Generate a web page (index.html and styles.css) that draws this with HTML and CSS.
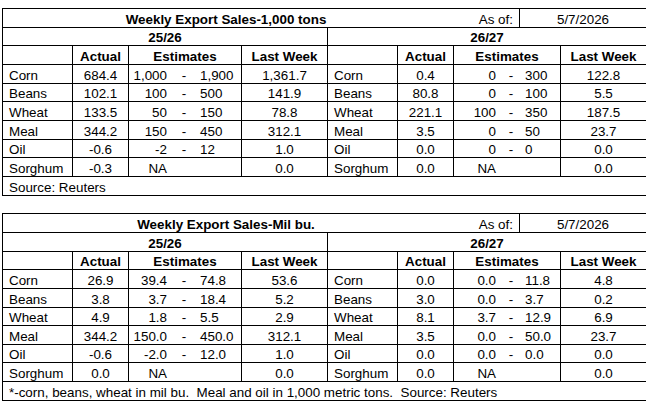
FILE: index.html
```html
<!DOCTYPE html>
<html lang="en">
<head>
<meta charset="utf-8">
<title>Weekly Export Sales</title>
<link rel="stylesheet" href="styles.css">
</head>
<body>
<div class="sheet">

  <div class="tbl">
    <div class="c full titlerow">
      <span class="title">Weekly Export Sales-1,000 tons</span>
      <span class="asof">As of:</span>
      <span class="date">5/7/2026</span>
    </div>
    <div class="c half b ctr vr">25/26</div>
    <div class="c half b ctr">26/27</div>

    <div class="c vr"></div><div class="c b ctr vr">Actual</div><div class="c est b ctr vr">Estimates</div><div class="c b ctr vr">Last Week</div>
    <div class="c vr"></div><div class="c b ctr vr">Actual</div><div class="c est b ctr vr">Estimates</div><div class="c b ctr">Last Week</div>

    <div class="c lbl vr">Corn</div><div class="c ctr vr">684.4</div><div class="c lo">1,000</div><div class="c ctr">-</div><div class="c hi vr">1,900</div><div class="c ctr vr">1,361.7</div>
    <div class="c lbl vr">Corn</div><div class="c ctr vr">0.4</div><div class="c lo">0</div><div class="c ctr">-</div><div class="c hi vr">300</div><div class="c ctr">122.8</div>

    <div class="c lbl vr">Beans</div><div class="c ctr vr">102.1</div><div class="c lo">100</div><div class="c ctr">-</div><div class="c hi vr">500</div><div class="c ctr vr">141.9</div>
    <div class="c lbl vr">Beans</div><div class="c ctr vr">80.8</div><div class="c lo">0</div><div class="c ctr">-</div><div class="c hi vr">100</div><div class="c ctr">5.5</div>

    <div class="c lbl vr">Wheat</div><div class="c ctr vr">133.5</div><div class="c lo">50</div><div class="c ctr">-</div><div class="c hi vr">150</div><div class="c ctr vr">78.8</div>
    <div class="c lbl vr">Wheat</div><div class="c ctr vr">221.1</div><div class="c lo">100</div><div class="c ctr">-</div><div class="c hi vr">350</div><div class="c ctr">187.5</div>

    <div class="c lbl vr">Meal</div><div class="c ctr vr">344.2</div><div class="c lo">150</div><div class="c ctr">-</div><div class="c hi vr">450</div><div class="c ctr vr">312.1</div>
    <div class="c lbl vr">Meal</div><div class="c ctr vr">3.5</div><div class="c lo">0</div><div class="c ctr">-</div><div class="c hi vr">50</div><div class="c ctr">23.7</div>

    <div class="c lbl vr">Oil</div><div class="c ctr vr">-0.6</div><div class="c lo">-2</div><div class="c ctr">-</div><div class="c hi vr">12</div><div class="c ctr vr">1.0</div>
    <div class="c lbl vr">Oil</div><div class="c ctr vr">0.0</div><div class="c lo">0</div><div class="c ctr">-</div><div class="c hi vr">0</div><div class="c ctr">0.0</div>

    <div class="c lbl vr">Sorghum</div><div class="c ctr vr">-0.3</div><div class="c lo">NA</div><div class="c"></div><div class="c vr"></div><div class="c ctr vr">0.0</div>
    <div class="c lbl vr">Sorghum</div><div class="c ctr vr">0.0</div><div class="c lo">NA</div><div class="c"></div><div class="c vr"></div><div class="c ctr">0.0</div>

    <div class="c full lbl note">Source: Reuters</div>
  </div>

  <div class="tbl second">
    <div class="c full titlerow">
      <span class="title">Weekly Export Sales-Mil bu.</span>
      <span class="asof">As of:</span>
      <span class="date">5/7/2026</span>
    </div>
    <div class="c half b ctr vr">25/26</div>
    <div class="c half b ctr">26/27</div>

    <div class="c vr"></div><div class="c b ctr vr">Actual</div><div class="c est b ctr vr">Estimates</div><div class="c b ctr vr">Last Week</div>
    <div class="c vr"></div><div class="c b ctr vr">Actual</div><div class="c est b ctr vr">Estimates</div><div class="c b ctr">Last Week</div>

    <div class="c lbl vr">Corn</div><div class="c ctr vr">26.9</div><div class="c lo">39.4</div><div class="c ctr">-</div><div class="c hi vr">74.8</div><div class="c ctr vr">53.6</div>
    <div class="c lbl vr">Corn</div><div class="c ctr vr">0.0</div><div class="c lo">0.0</div><div class="c ctr">-</div><div class="c hi vr">11.8</div><div class="c ctr">4.8</div>

    <div class="c lbl vr">Beans</div><div class="c ctr vr">3.8</div><div class="c lo">3.7</div><div class="c ctr">-</div><div class="c hi vr">18.4</div><div class="c ctr vr">5.2</div>
    <div class="c lbl vr">Beans</div><div class="c ctr vr">3.0</div><div class="c lo">0.0</div><div class="c ctr">-</div><div class="c hi vr">3.7</div><div class="c ctr">0.2</div>

    <div class="c lbl vr">Wheat</div><div class="c ctr vr">4.9</div><div class="c lo">1.8</div><div class="c ctr">-</div><div class="c hi vr">5.5</div><div class="c ctr vr">2.9</div>
    <div class="c lbl vr">Wheat</div><div class="c ctr vr">8.1</div><div class="c lo">3.7</div><div class="c ctr">-</div><div class="c hi vr">12.9</div><div class="c ctr">6.9</div>

    <div class="c lbl vr">Meal</div><div class="c ctr vr">344.2</div><div class="c lo">150.0</div><div class="c ctr">-</div><div class="c hi vr">450.0</div><div class="c ctr vr">312.1</div>
    <div class="c lbl vr">Meal</div><div class="c ctr vr">3.5</div><div class="c lo">0.0</div><div class="c ctr">-</div><div class="c hi vr">50.0</div><div class="c ctr">23.7</div>

    <div class="c lbl vr">Oil</div><div class="c ctr vr">-0.6</div><div class="c lo">-2.0</div><div class="c ctr">-</div><div class="c hi vr">12.0</div><div class="c ctr vr">1.0</div>
    <div class="c lbl vr">Oil</div><div class="c ctr vr">0.0</div><div class="c lo">0.0</div><div class="c ctr">-</div><div class="c hi vr">0.0</div><div class="c ctr">0.0</div>

    <div class="c lbl vr">Sorghum</div><div class="c ctr vr">0.0</div><div class="c lo">NA</div><div class="c"></div><div class="c vr"></div><div class="c ctr vr">0.0</div>
    <div class="c lbl vr">Sorghum</div><div class="c ctr vr">0.0</div><div class="c lo">NA</div><div class="c"></div><div class="c vr"></div><div class="c ctr">0.0</div>

    <div class="c full lbl note">*-corn, beans, wheat in mil bu.  Meal and oil in 1,000 metric tons.  Source: Reuters</div>
  </div>

</div>
</body>
</html>
```

FILE: styles.css
```css
html, body {
  margin: 0;
  padding: 0;
  background: #ffffff;
  overflow: hidden;
}

body {
  font-family: "Liberation Sans", Arial, sans-serif;
  font-size: 13.4px;
  color: #000000;
}

.sheet {
  padding: 8px 0 0 2px;
}

.tbl {
  display: grid;
  grid-template-columns: 70px 56px 41px 28px 44px 86px 70px 56px 45px 24px 38px 85px;
  grid-auto-rows: 18.667px;
  border-top: 1px solid #000;
  border-left: 1px solid #000;
  width: 643px;
}

.tbl.second {
  margin-top: 17.667px;
}

.c {
  box-sizing: border-box;
  border-bottom: 1px solid #000;
  line-height: 15px;
  padding-top: 2.667px;
  white-space: nowrap;
  overflow: hidden;
}

.vr { border-right: 1px solid #000; }
.b { font-weight: bold; }
.ctr { text-align: center; }
.lbl { padding-left: 6px; }
.lo { text-align: right; padding-right: 3px; }
.hi { text-align: left; padding-left: 2px; }

.full { grid-column: 1 / -1; }
.half { grid-column: span 6; }
.est { grid-column: span 3; }

.note { white-space: pre; }

.titlerow {
  display: flex;
  padding-top: 0;
}

.titlerow > span {
  box-sizing: border-box;
  padding-top: 2.667px;
}

.title {
  width: 446px;
  flex: none;
  text-align: center;
  font-weight: bold;
}

.asof {
  width: 70px;
  flex: none;
  text-align: right;
  padding-right: 6px;
}

.date {
  flex: 1;
  text-align: center;
  border-left: 1px solid #000;
}
```
